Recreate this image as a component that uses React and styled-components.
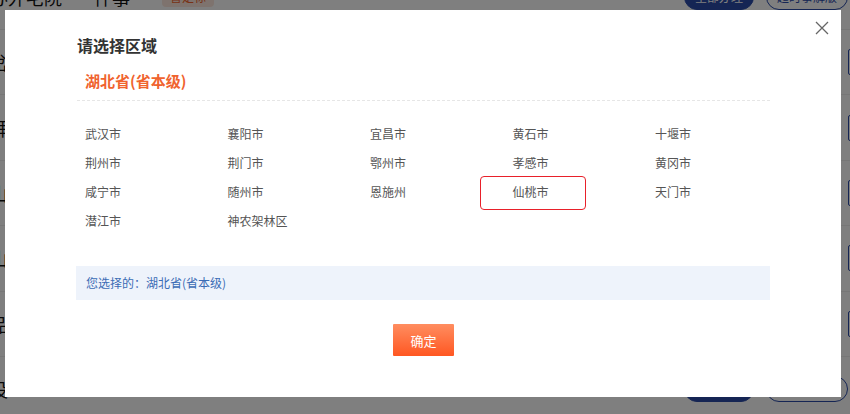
import React, { useState } from 'react';
import styled, { createGlobalStyle } from 'styled-components';

const GlobalStyle = createGlobalStyle`
  html, body {
    margin: 0;
    padding: 0;
    background: #fff;
    font-family: "Noto Sans CJK SC", "Noto Sans", sans-serif;
    overflow: hidden;
  }
`;

const cities = [
  '武汉市', '襄阳市', '宜昌市', '黄石市', '十堰市',
  '荆州市', '荆门市', '鄂州市', '孝感市', '黄冈市',
  '咸宁市', '随州市', '恩施州', '仙桃市', '天门市',
  '潜江市', '神农架林区',
];

const rowHeads = ['岔', '拜', '山', '山', '品'];

function Actions() {
  return (
    <PillGroup>
      <Pill filled={1}>全部办理</Pill>
      <Pill>超时事解版</Pill>
      <Pill>帮办</Pill>
    </PillGroup>
  );
}

function App() {
  const [marked] = useState('仙桃市');

  return (
    <>
      <GlobalStyle />
      <Page>
        <ListRow>
          <RowText>办外宅院</RowText>
          <RowText>件事</RowText>
          <Tag>督定标</Tag>
          <Spacer />
          <Actions />
        </ListRow>
        {rowHeads.map((h, i) => (
          <ListRow key={i}>
            <RowText>{h}</RowText>
            <Spacer />
            <SideBtn>帮办</SideBtn>
          </ListRow>
        ))}
        <ListRow>
          <RowText>没</RowText>
          <Spacer />
          <Actions />
        </ListRow>
      </Page>

      <Overlay>
        <Modal>
          <Close aria-label="close">
            <svg width="14" height="14" viewBox="0 0 14 14">
              <path d="M1 1 L13 13 M13 1 L1 13" stroke="#666" strokeWidth="1.3" fill="none" />
            </svg>
          </Close>
          <Title>请选择区域</Title>
          <Province>湖北省(省本级)</Province>
          <CityGrid>
            {cities.map(c => (
              <City key={c} marked={c === marked ? 1 : 0}>{c}</City>
            ))}
          </CityGrid>
          <Chosen>您选择的：湖北省(省本级)</Chosen>
          <Footer>
            <Confirm>确定</Confirm>
          </Footer>
        </Modal>
      </Overlay>
    </>
  );
}

const Page = styled.div`
  width: 850px;
  height: 414px;
  display: flex;
  flex-direction: column;
  overflow: hidden;
`;

const ListRow = styled.div`
  flex: none;
  height: 65.4px;
  box-sizing: border-box;
  display: flex;
  align-items: center;
  gap: 32px;
  border-bottom: 1px solid #eee;
  margin-left: -10px;
  &:first-child {
    margin-top: -35.4px;
  }
`;

const RowText = styled.span`
  font-size: 18px;
  color: #111;
  white-space: nowrap;
`;

const Tag = styled.span`
  font-size: 12px;
  color: #f0632e;
  background: #fde7dc;
  padding: 2px 8px;
  border-radius: 4px;
`;

const Spacer = styled.div`
  flex: 1;
`;

const PillGroup = styled.div`
  display: flex;
  gap: 12px;
  margin-right: -56px;
`;

const Pill = styled.span`
  height: 26px;
  padding: 0 10px;
  border-radius: 13px;
  font-size: 12px;
  line-height: 24px;
  box-sizing: border-box;
  border: 1px solid #2a4aa8;
  color: ${p => (p.filled ? '#fff' : '#2a4aa8')};
  background: ${p => (p.filled ? '#2a4aa8' : '#fff')};
  white-space: nowrap;
`;

const SideBtn = styled.span`
  height: 24px;
  padding: 0 12px 0 2px;
  margin-right: -38px;
  border: 1px solid #2a4aa8;
  border-radius: 2px;
  color: #2a4aa8;
  font-size: 12px;
  line-height: 22px;
`;

const Overlay = styled.div`
  position: fixed;
  inset: 0;
  background: rgba(0, 0, 0, 0.5);
`;

const Modal = styled.div`
  position: absolute;
  left: 5px;
  top: 10px;
  width: 836px;
  height: 387px;
  box-sizing: border-box;
  background: #fff;
  padding: 24px 71px 0 72px;
  display: flex;
  flex-direction: column;
`;

const Close = styled.button`
  position: absolute;
  right: 12px;
  top: 11px;
  width: 14px;
  height: 14px;
  padding: 0;
  border: 0;
  background: none;
  display: flex;
`;

const Title = styled.h2`
  margin: 0;
  font-size: 16px;
  line-height: 22px;
  font-weight: 700;
  color: #333;
`;

const Province = styled.div`
  margin-top: 14px;
  padding: 0 8px 8px;
  font-size: 15px;
  line-height: 22px;
  font-weight: 700;
  color: #f0632e;
  border-bottom: 1px dashed #e6e6e6;
`;

const CityGrid = styled.div`
  margin-top: 18px;
  padding-left: 8px;
  display: grid;
  grid-template-columns: repeat(5, 142.5px);
  grid-auto-rows: 29px;
`;

const City = styled.div`
  position: relative;
  font-size: 12px;
  line-height: 29px;
  color: #555;
  &::after {
    content: '';
    display: ${p => (p.marked ? 'block' : 'none')};
    position: absolute;
    left: -33px;
    top: -1px;
    width: 106px;
    height: 34px;
    border: 1.5px solid #e8202a;
    border-radius: 4px;
    box-sizing: border-box;
  }
`;

const Chosen = styled.div`
  margin-top: 31px;
  margin-left: -1px;
  height: 34px;
  padding-left: 10px;
  background: #eef3fb;
  color: #3b6cb5;
  font-size: 12px;
  line-height: 34px;
`;

const Footer = styled.div`
  margin-top: 24px;
  display: flex;
  justify-content: center;
`;

const Confirm = styled.button`
  width: 61px;
  height: 32px;
  border: 0;
  border-radius: 1px;
  background: linear-gradient(#ff8d60, #ff5722);
  color: #fff;
  font-family: inherit;
  font-size: 13px;
  cursor: pointer;
`;

export default App;
